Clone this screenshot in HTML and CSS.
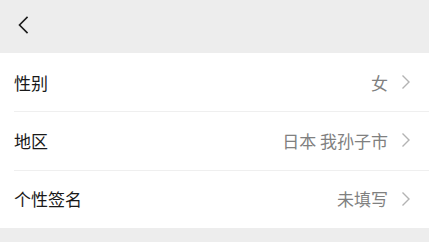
FILE: index.html
```html
<!DOCTYPE html>
<html lang="zh-CN">
<head>
<meta charset="utf-8">
<title>个人信息</title>
<link rel="stylesheet" href="styles.css">
</head>
<body>
<div class="page">
  <header class="nav">
    <svg class="back" width="12" height="20" viewBox="0 0 12 20">
      <path d="M10 2.5 L2.5 10 L10 17.5" fill="none" stroke="#1b1b1b" stroke-width="1.6" stroke-linecap="square"/>
    </svg>
  </header>
  <ul class="list">
    <li class="row">
      <span class="label">性别</span>
      <span class="value">女</span>
      <svg class="arrow" width="10" height="16" viewBox="0 0 10 16"><path d="M1.5 1.5 L8 8 L1.5 14.5" fill="none" stroke="#b3b3b3" stroke-width="1.4"/></svg>
    </li>
    <li class="row">
      <span class="label">地区</span>
      <span class="value">日本 我孙子市</span>
      <svg class="arrow" width="10" height="16" viewBox="0 0 10 16"><path d="M1.5 1.5 L8 8 L1.5 14.5" fill="none" stroke="#b3b3b3" stroke-width="1.4"/></svg>
    </li>
    <li class="row">
      <span class="label">个性签名</span>
      <span class="value">未填写</span>
      <svg class="arrow" width="10" height="16" viewBox="0 0 10 16"><path d="M1.5 1.5 L8 8 L1.5 14.5" fill="none" stroke="#b3b3b3" stroke-width="1.4"/></svg>
    </li>
  </ul>
</div>
</body>
</html>
```
FILE: styles.css
```css
html, body {
  margin: 0;
  padding: 0;
  background: #ededed;
}
body {
  font-family: "Noto Sans CJK SC", "Noto Sans", sans-serif;
  width: 429px;
  height: 242px;
  overflow: hidden;
}
.page {
  display: flex;
  flex-direction: column;
}
.nav {
  height: 53px;
  display: flex;
  align-items: center;
  padding-left: 17px;
  box-sizing: border-box;
  background: #ededed;
}
.back {
  display: block;
  margin-top: -4px;
}
.list {
  list-style: none;
  margin: 0;
  padding: 0;
  background: #fff;
  height: 175px;
  display: flex;
  flex-direction: column;
}
.row {
  flex: 1;
  display: flex;
  align-items: center;
  padding: 0 18px 0 14px;
  position: relative;
  font-size: 17px;
  font-weight: 400;
  line-height: 1;
}
.row + .row::before {
  content: "";
  position: absolute;
  left: 14px;
  right: 0;
  top: 0;
  height: 1px;
  background: #efefef;
}
.label {
  color: #191919;
  flex: 1;
}
.value {
  color: #808080;
  margin-right: 13px;
}
.arrow {
  display: block;
}
```
